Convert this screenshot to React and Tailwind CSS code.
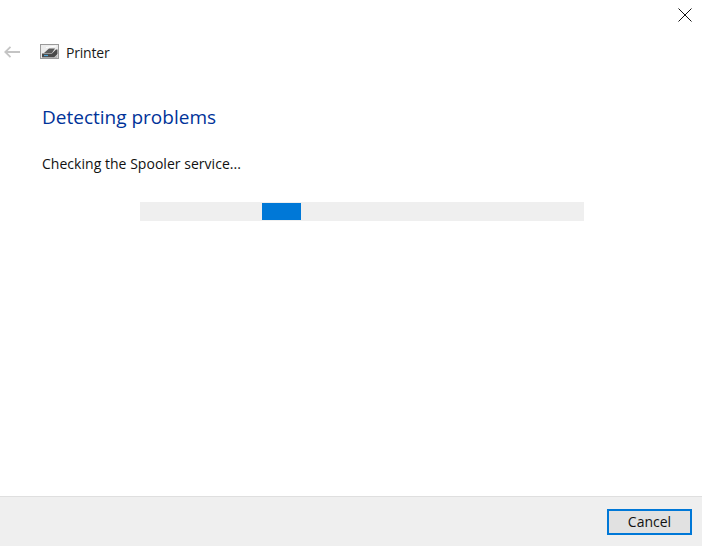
export default function App() {
  return (
    <div className="w-[702px] h-[546px] bg-white flex flex-col overflow-hidden font-['Open_Sans','Noto_Sans',sans-serif] text-[#000]">
      <div className="h-[29px] flex justify-end pr-[10px] pt-[8px]">
        <svg width="14" height="14" viewBox="0 0 14 14" className="block">
          <path d="M0.5 0.5 L13.5 13.5 M13.5 0.5 L0.5 13.5" stroke="#111" strokeWidth="1" fill="none" />
        </svg>
      </div>
      <div className="h-[46px] flex items-center pl-[4px]">
        <svg width="16" height="12" viewBox="0 0 16 12" className="block">
          <path d="M1 6 H16 M6.5 0.8 L1.2 6 L6.5 11.2" stroke="#c4c4c4" strokeWidth="1.8" fill="none" />
        </svg>
        <svg width="20" height="16" viewBox="0 0 20 16" className="block ml-[20px]">
          <rect x="0.5" y="0.5" width="18" height="14" fill="#ececec" stroke="#9a9a9a" />
          <path d="M4 9 L9 4.5 H15 L12 9 Z" fill="#5a5a5a" />
          <path d="M2 9.5 H12 L16 5.5 L17.5 5.5 L17.5 10 L14 13.5 H2 Z" fill="#4a4a4a" />
          <path d="M2 13.5 H14 L17.5 10.5 V14 H2 Z" fill="#b5b5b5" />
          <path d="M4 11.5 H8" stroke="#4aa3d8" strokeWidth="1.2" />
          <path d="M6 3.5 L16 2" stroke="#ffffff" strokeWidth="1" />
        </svg>
        <span className="ml-[6px] mt-[2px] text-[14px] leading-[20px] tracking-[-0.2px] text-[#1a1a1a]">Printer</span>
      </div>
      <div className="flex-1 pl-[42px]">
        <h1 className="mt-[28px] text-[19px] leading-[28px] font-normal text-[#003399]">Detecting problems</h1>
        <p className="mt-[23px] text-[14px] leading-[20px] tracking-[0.03px] text-[#111]">Checking the Spooler service...</p>
        <div className="mt-[28px] ml-[98px] w-[444px] h-[19px] bg-[#efefef] pl-[122px] py-[1px]">
          <div className="w-[39px] h-[17px] bg-[#0078d7]"></div>
        </div>
      </div>
      <div className="h-[50px] bg-[#efefef] border-t border-[#dfdfdf] flex items-center justify-end pr-[10px]">
        <button className="w-[85px] h-[26px] border-2 border-[#0078d7] bg-[#e1e1e1] text-[14px] leading-[20px] text-[#111] flex items-center justify-center">Cancel</button>
      </div>
    </div>
  );
}
